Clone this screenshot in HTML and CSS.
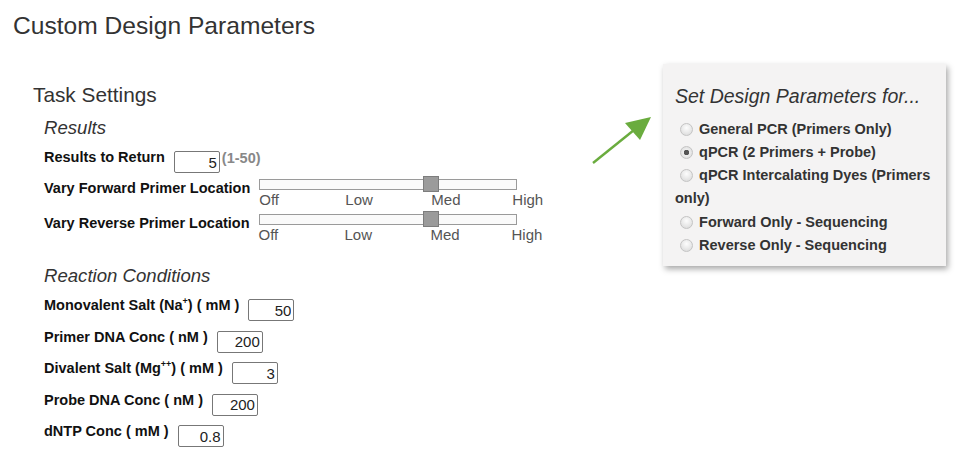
FILE: index.html
```html
<!doctype html>
<html>
	<head>
		<meta charset="utf-8" />
		<title>Custom Design Parameters</title>
		<link rel="stylesheet" href="styles.css">
	</head>
	<body>
		<h1 class="page-title">Custom Design Parameters</h1>
		<div class="main">
			<div class="settings">
				<h2 class="task-title">Task Settings</h2>

				<h3 class="group-title">Results</h3>
				<div class="field first">
					<label>Results to Return</label>
					<input type="text" class="num" value="5" />
					<span class="range">(1-50)</span>
				</div>
				<div class="field slider-row">
					<label class="slider-label">Vary Forward Primer Location</label>
					<div class="slider">
						<div class="track"><span class="thumb"></span></div>
						<div class="ticks"><span>Off</span><span>Low</span><span>Med</span><span>High</span></div>
					</div>
				</div>
				<div class="field slider-row second">
					<label class="slider-label">Vary Reverse Primer Location</label>
					<div class="slider">
						<div class="track"><span class="thumb"></span></div>
						<div class="ticks"><span>Off</span><span>Low</span><span>Med</span><span>High</span></div>
					</div>
				</div>

				<h3 class="group-title reaction">Reaction Conditions</h3>
				<div class="field first">
					<label>Monovalent Salt (Na<sup>+</sup>) ( mM )</label>
					<input type="text" class="num" value="50" />
				</div>
				<div class="field">
					<label>Primer DNA Conc ( nM )</label>
					<input type="text" class="num" value="200" />
				</div>
				<div class="field">
					<label>Divalent Salt (Mg<sup>++</sup>) ( mM )</label>
					<input type="text" class="num" value="3" />
				</div>
				<div class="field">
					<label>Probe DNA Conc ( nM )</label>
					<input type="text" class="num" value="200" />
				</div>
				<div class="field">
					<label>dNTP Conc ( mM )</label>
					<input type="text" class="num" value="0.8" />
				</div>
			</div>

			<div class="panel">
				<h3 class="panel-title">Set Design Parameters for...</h3>
				<ul class="options">
					<li><label><input type="radio" name="mode" /> General PCR (Primers Only)</label></li>
					<li><label><input type="radio" name="mode" checked /> qPCR (2 Primers + Probe)</label></li>
					<li><label><input type="radio" name="mode" /> qPCR Intercalating Dyes (Primers only)</label></li>
					<li><label><input type="radio" name="mode" /> Forward Only - Sequencing</label></li>
					<li><label><input type="radio" name="mode" /> Reverse Only - Sequencing</label></li>
				</ul>
			</div>
		</div>

		<svg class="arrow" width="75" height="60" viewBox="0 0 75 60">
			<line x1="8" y1="53" x2="49" y2="20" stroke="#6aac3e" stroke-width="2.4" />
			<polygon points="66,7 40,13 55,30" fill="#6aac3e" />
		</svg>
	</body>
</html>
```

FILE: styles.css
```css
*{
	margin:0;
	padding:0;
}
body{
	background:#fff;
	color:#222;
	font-family:"Liberation Sans", Arial, sans-serif;
	font-size:14.5px;
	position:relative;
	width:974px;
	height:462px;
	overflow:hidden;
}
.page-title{
	font-size:24.6px;
	font-weight:normal;
	line-height:28px;
	color:#333;
	margin:12px 0 0 13px;
}
.main{
	display:flex;
	margin-top:24px;
}
.settings{
	flex:1;
	padding:19px 0 0 33px;
}
.task-title{
	font-size:20.8px;
	font-weight:normal;
	line-height:24px;
	color:#333;
}
.group-title{
	font-size:18.6px;
	font-weight:normal;
	font-style:italic;
	line-height:22px;
	color:#333;
	margin:10px 0 0 11px;
}
.group-title.reaction{
	margin-top:23px;
}
.field{
	display:flex;
	align-items:flex-start;
	margin:9.6px 0 0 11px;
}
.field.first{
	margin-top:12px;
}
.field label{
	font-weight:bold;
	line-height:12px;
	color:#111;
	margin-right:9px;
	white-space:nowrap;
}
.field sup{
	font-size:9px;
	line-height:0;
	vertical-align:6px;
}
.num{
	width:46px;
	height:22px;
	box-sizing:border-box;
	border:1px solid #777;
	border-radius:2px;
	text-align:right;
	padding-right:2px;
	font-family:"Liberation Sans", Arial, sans-serif;
	font-size:15px;
	color:#222;
	background:#fff;
}
.range{
	font-weight:bold;
	color:#888;
	line-height:14px;
	margin-left:2px;
}
.slider-row{
	margin-top:3px;
}
.slider-row.second{
	margin-top:4px;
}
.slider-row .slider-label{
	padding-top:6px;
}
.slider{
	padding-top:3px;
	width:258px;
}
.track{
	position:relative;
	height:11px;
	box-sizing:border-box;
	border:1px solid #9a9a9a;
	background:#fafafa;
}
.thumb{
	position:absolute;
	left:163px;
	top:-4px;
	width:16px;
	height:16px;
	box-sizing:border-box;
	background:#9b9b9b;
	border:1px solid #7d7d7d;
}
.ticks{
	display:flex;
	margin-top:3px;
	font-size:15px;
	line-height:14px;
	color:#555;
	white-space:nowrap;
}
.ticks span{
	flex:none;
	width:86px;
}
.ticks span:nth-child(3){
	width:81px;
}
.ticks span:last-child{
	width:auto;
}
.panel{
	width:283px;
	height:202px;
	box-sizing:border-box;
	margin-right:28px;
	padding:21px 12px 8px 12px;
	background:#f4f3f3;
	box-shadow:2px 3px 6px rgba(0,0,0,.35);
}
.panel-title{
	font-size:19.5px;
	font-weight:normal;
	font-style:italic;
	line-height:22px;
	color:#333;
}
.options{
	list-style:none;
	margin-top:10.6px;
}
.options li{
	font-weight:bold;
	line-height:23.3px;
	color:#333;
}
.options input{
	-webkit-appearance:none;
	appearance:none;
	width:13px;
	height:13px;
	margin:0 2px 0 5px;
	vertical-align:-2px;
	border:1px solid #c4c4c4;
	border-radius:50%;
	background:radial-gradient(circle at 50% 35%, #fdfdfd 0, #e8e8e8 55%, #d6d6d6 100%);
	box-sizing:border-box;
}
.options input:checked{
	background:radial-gradient(circle, #555 0, #555 2.5px, #eee 3px, #d6d6d6 100%);
}
.arrow{
	position:absolute;
	left:585px;
	top:110px;
}
```
